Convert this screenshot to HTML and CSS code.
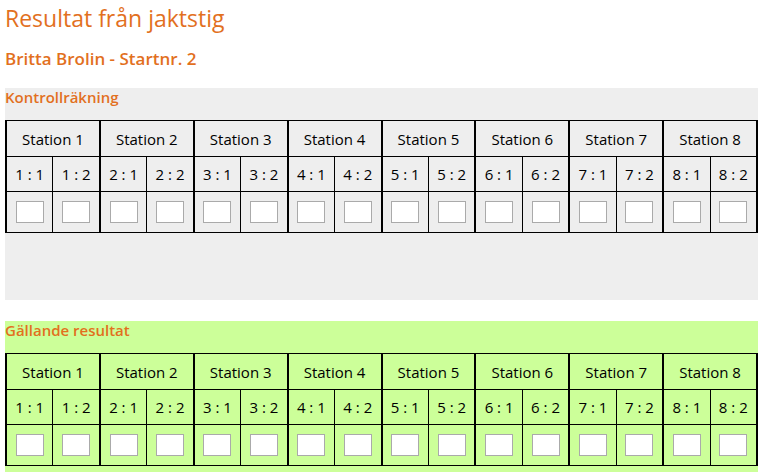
FILE: index.html
```html
<!DOCTYPE html>
<html lang="sv">
<head>
<meta charset="utf-8">
<title>Resultat från jaktstig</title>
<link rel="stylesheet" href="styles.css">
</head>
<body>
<h1 class="title">Resultat från jaktstig</h1>
<h2 class="subtitle">Britta Brolin - Startnr. 2</h2>

<section class="panel panel-gray">
  <h3 class="panel-title">Kontrollräkning</h3>
  <table class="grid">
    <tr class="row-head">
      <td colspan="2" class="st">Station 1</td><td colspan="2" class="st">Station 2</td><td colspan="2" class="st">Station 3</td><td colspan="2" class="st">Station 4</td><td colspan="2" class="st">Station 5</td><td colspan="2" class="st">Station 6</td><td colspan="2" class="st">Station 7</td><td colspan="2" class="st">Station 8</td>
    </tr>
    <tr class="row-sub">
      <td class="st">1 : 1</td><td>1 : 2</td><td class="st">2 : 1</td><td>2 : 2</td><td class="st">3 : 1</td><td>3 : 2</td><td class="st">4 : 1</td><td>4 : 2</td><td class="st">5 : 1</td><td>5 : 2</td><td class="st">6 : 1</td><td>6 : 2</td><td class="st">7 : 1</td><td>7 : 2</td><td class="st">8 : 1</td><td>8 : 2</td>
    </tr>
    <tr class="row-input">
      <td class="st"><input class="box" type="text"></td><td><input class="box" type="text"></td><td class="st"><input class="box" type="text"></td><td><input class="box" type="text"></td><td class="st"><input class="box" type="text"></td><td><input class="box" type="text"></td><td class="st"><input class="box" type="text"></td><td><input class="box" type="text"></td><td class="st"><input class="box" type="text"></td><td><input class="box" type="text"></td><td class="st"><input class="box" type="text"></td><td><input class="box" type="text"></td><td class="st"><input class="box" type="text"></td><td><input class="box" type="text"></td><td class="st"><input class="box" type="text"></td><td><input class="box" type="text"></td>
    </tr>
  </table>
</section>

<section class="panel panel-green">
  <h3 class="panel-title">Gällande resultat</h3>
  <table class="grid">
    <tr class="row-head">
      <td colspan="2" class="st">Station 1</td><td colspan="2" class="st">Station 2</td><td colspan="2" class="st">Station 3</td><td colspan="2" class="st">Station 4</td><td colspan="2" class="st">Station 5</td><td colspan="2" class="st">Station 6</td><td colspan="2" class="st">Station 7</td><td colspan="2" class="st">Station 8</td>
    </tr>
    <tr class="row-sub">
      <td class="st">1 : 1</td><td>1 : 2</td><td class="st">2 : 1</td><td>2 : 2</td><td class="st">3 : 1</td><td>3 : 2</td><td class="st">4 : 1</td><td>4 : 2</td><td class="st">5 : 1</td><td>5 : 2</td><td class="st">6 : 1</td><td>6 : 2</td><td class="st">7 : 1</td><td>7 : 2</td><td class="st">8 : 1</td><td>8 : 2</td>
    </tr>
    <tr class="row-input">
      <td class="st"><input class="box" type="text"></td><td><input class="box" type="text"></td><td class="st"><input class="box" type="text"></td><td><input class="box" type="text"></td><td class="st"><input class="box" type="text"></td><td><input class="box" type="text"></td><td class="st"><input class="box" type="text"></td><td><input class="box" type="text"></td><td class="st"><input class="box" type="text"></td><td><input class="box" type="text"></td><td class="st"><input class="box" type="text"></td><td><input class="box" type="text"></td><td class="st"><input class="box" type="text"></td><td><input class="box" type="text"></td><td class="st"><input class="box" type="text"></td><td><input class="box" type="text"></td>
    </tr>
  </table>
</section>
</body>
</html>
```

FILE: styles.css
```css
body {
  margin: 5px;
  font-family: "Open Sans", "Noto Sans", sans-serif;
  color: #000;
  background: #fff;
}
.title {
  margin: 0;
  font-size: 23px;
  font-weight: normal;
  line-height: 26px;
  color: #e2701e;
}
.subtitle {
  margin: 17px 0 0 0;
  font-size: 17px;
  font-weight: 600;
  line-height: 22px;
  color: #e2701e;
}
.panel {
  margin-top: 18px;
  padding-bottom: 67px;
}
.panel-gray {
  background: #eeeeee;
}
.panel-green {
  margin-top: 21px;
  background: #ccff99;
  padding-bottom: 10px;
}
.panel-title {
  margin: 0;
  height: 32px;
  font-size: 15px;
  font-weight: 600;
  line-height: 18px;
  color: #e2701e;
}
.grid {
  width: 100%;
  border-collapse: collapse;
  table-layout: fixed;
  border-right: 2px solid #000;
  font-size: 15px;
}
.grid td {
  border: 1px solid #000;
  text-align: center;
  padding: 0;
}
.grid td.st {
  border-left: 2px solid #000;
}
.row-head td {
  height: 35px;
}
.row-sub td {
  height: 34px;
}
.row-input td {
  height: 40px;
}
.box {
  display: block;
  margin: 0 auto;
  width: 28px;
  height: 22px;
  box-sizing: border-box;
  border: 1px solid #aaaaaa;
  background: #fff;
  padding: 0;
}
```
